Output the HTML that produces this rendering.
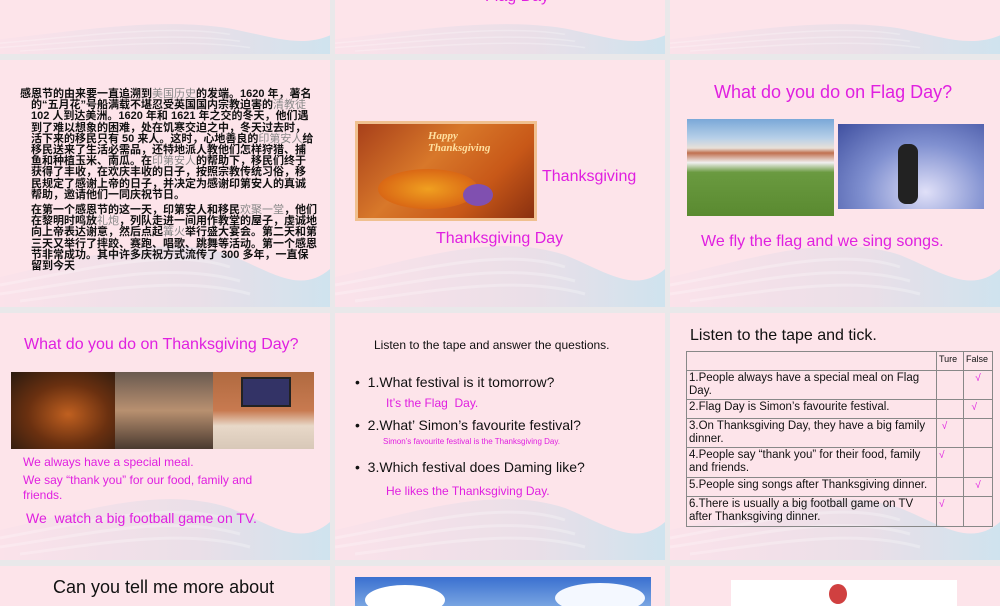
<!DOCTYPE html>
<html><head><meta charset="utf-8"><style>
*{margin:0;padding:0;box-sizing:border-box}
body{width:1000px;height:600px;background:#e9e8ea;position:relative;overflow:hidden;font-family:"Liberation Sans","Noto Sans CJK SC",sans-serif}
.s{position:absolute;background:#fde4ea;overflow:hidden}
.s svg.w{position:absolute;left:0;bottom:0;width:100%;height:110px}
.a{position:absolute;white-space:nowrap}
.m{color:#e020e0}
table{border-collapse:collapse;font-size:11.5px;color:#111}
td{border:1px solid #888;padding:1px 2px;line-height:13px;vertical-align:top}
.ck{color:#e020e0;font-size:10px}
.cn{position:absolute;font-size:11px;line-height:11.2px;color:#111;letter-spacing:0;font-weight:bold}
.g{color:#888;font-weight:normal}
</style></head><body>
<svg width="0" height="0" style="position:absolute"><defs>
<linearGradient id="g" x1="0" x2="1"><stop offset="0" stop-color="#fbe2ea"/><stop offset="0.6" stop-color="#eadfe8"/><stop offset="1" stop-color="#cfe3ee"/></linearGradient>
<symbol id="wv" viewBox="0 0 330 110" preserveAspectRatio="none"><path d="M0 110 L0 80 C80 62 160 35 230 58 C270 74 300 98 330 72 L330 110Z" fill="url(#g)"/><path d="M0 88 C90 72 170 50 230 70 M0 97 C90 84 170 64 240 84 M20 104 C100 94 180 78 250 97" stroke="#fff" stroke-opacity=".25" fill="none" stroke-width="3"/></symbol>
</defs></svg>

<div class="s" style="left:0;top:0;width:330px;height:54px"><svg class="w" style="height:54px"><use href="#wv" width="330" height="54"/></svg></div>
<div class="s" style="left:335px;top:0;width:330px;height:54px"><svg class="w" style="height:54px"><use href="#wv" width="330" height="54"/></svg><div class="a m" style="left:150px;top:-12px;font-size:16px">Flag Day</div></div>
<div class="s" style="left:670px;top:0;width:330px;height:54px"><svg class="w" style="height:54px"><use href="#wv" width="330" height="54"/></svg></div>

<div class="s" style="left:0;top:60px;width:330px;height:247px"><svg class="w"><use href="#wv" width="330" height="110"/></svg>
<div class="cn" style="left:20px;top:29px;width:294px;text-indent:-11px;padding-left:11px">感恩节的由来要一直追溯到<span class="g">美国历史</span>的发端。1620 年，著名的“五月花”号船满载不堪忍受英国国内宗教迫害的<span class="g">清教徒</span> 102 人到达美洲。1620 年和 1621 年之交的冬天，他们遇到了难以想象的困难，处在饥寒交迫之中，冬天过去时，活下来的移民只有 50 来人。这时，心地善良的<span class="g">印第安人</span>给移民送来了生活必需品，还特地派人教他们怎样狩猎、捕鱼和种植玉米、南瓜。在<span class="g">印第安人</span>的帮助下，移民们终于获得了丰收，在欢庆丰收的日子，按照宗教传统习俗，移民规定了感谢上帝的日子，并决定为感谢印第安人的真诚帮助，邀请他们一同庆祝节日。</div>
<div class="cn" style="left:31px;top:145px;width:286px">在第一个感恩节的这一天，印第安人和移民<span class="g">欢聚一堂</span>，他们在黎明时鸣放<span class="g">礼炮</span>，列队走进一间用作教堂的屋子，虔诚地向上帝表达谢意，然后点起<span class="g">篝火</span>举行盛大宴会。第二天和第三天又举行了摔跤、赛跑、唱歌、跳舞等活动。第一个感恩节非常成功。其中许多庆祝方式流传了 300 多年，一直保留到今天</div>
</div>
<div class="s" style="left:335px;top:60px;width:330px;height:247px"><svg class="w"><use href="#wv" width="330" height="110"/></svg>
<div style="position:absolute;left:20px;top:61px;width:182px;height:100px;background:linear-gradient(135deg,#a8401a,#d8782a 40%,#c85818 70%,#8a3010);border:3px solid #f0c090">
<div style="position:absolute;left:70px;top:6px;font:italic bold 11px 'Liberation Serif',serif;color:#ffe0a0;line-height:12px">Happy<br>Thanksgiving</div>
<div style="position:absolute;left:20px;top:45px;width:100px;height:40px;border-radius:50%;background:radial-gradient(#f0a020,#d05010)"></div>
<div style="position:absolute;left:105px;top:60px;width:30px;height:22px;border-radius:50%;background:#8050b0"></div></div>
<div class="a m" style="left:207px;top:108px;font-size:16px">Thanksgiving</div>
<div class="a m" style="left:101px;top:170px;font-size:16px">Thanksgiving Day</div></div>
<div class="s" style="left:670px;top:60px;width:330px;height:247px"><svg class="w"><use href="#wv" width="330" height="110"/></svg>
<div class="a m" style="left:44px;top:22px;font-size:18px">What do you do on Flag Day?</div>
<div style="position:absolute;left:17px;top:59px;width:147px;height:97px;background:linear-gradient(#7aa8d8 0,#b8d0e8 20%,#e8e0d8 30%,#c07050 35%,#f0f0f0 45%,#6a9a40 55%,#5a8a30 100%)"></div>
<div style="position:absolute;left:168px;top:64px;width:146px;height:85px;background:radial-gradient(ellipse at 60% 80%,#e0e0f8,#8090d0 50%,#4050a0)"><div style="position:absolute;left:60px;top:20px;width:20px;height:60px;background:#222;border-radius:8px"></div></div>
<div class="a m" style="left:31px;top:173px;font-size:16px">We fly the flag and we sing songs.</div></div>

<div class="s" style="left:0;top:313px;width:330px;height:247px"><svg class="w"><use href="#wv" width="330" height="110"/></svg>
<div class="a m" style="left:24px;top:23px;font-size:16px">What do you do on Thanksgiving Day?</div>
<div style="position:absolute;left:11px;top:59px;width:104px;height:77px;background:radial-gradient(ellipse at 55% 55%,#c06020,#6a3010 50%,#2a1a10)"></div>
<div style="position:absolute;left:115px;top:59px;width:98px;height:77px;background:linear-gradient(#6a5a50,#b89070 50%,#4a3a30)"></div>
<div style="position:absolute;left:213px;top:59px;width:101px;height:77px;background:linear-gradient(#b06a40 0,#c87a50 50%,#e8d8c8 70%,#d8c8b8)"><div style="position:absolute;left:28px;top:5px;width:50px;height:30px;background:#336;border:2px solid #222"></div></div>
<div class="a m" style="left:23px;top:142px;font-size:12px">We always have a special meal.</div>
<div class="m" style="position:absolute;left:23px;top:160px;width:260px;font-size:12px;line-height:15px">We say “thank you” for our food, family and friends.</div>
<div class="a m" style="left:26px;top:197px;font-size:14px">We &nbsp;watch a big football game on TV.</div></div>
<div class="s" style="left:335px;top:313px;width:330px;height:247px"><svg class="w"><use href="#wv" width="330" height="110"/></svg>
<div class="a" style="left:39px;top:25px;font-size:12px;color:#111">Listen to the tape and answer the questions.</div>
<div class="a" style="left:20px;top:61px;font-size:14px;color:#111">• &nbsp;1.What festival is it tomorrow?</div>
<div class="a m" style="left:51px;top:83px;font-size:12px">It’s the Flag &nbsp;Day.</div>
<div class="a" style="left:20px;top:104px;font-size:14px;color:#111">• &nbsp;2.What’ Simon’s favourite festival?</div>
<div class="a m" style="left:48px;top:124px;font-size:8px">Simon’s favourite festival is the Thanksgiving Day.</div>
<div class="a" style="left:20px;top:146px;font-size:14px;color:#111">• &nbsp;3.Which festival does Daming like?</div>
<div class="a m" style="left:51px;top:171px;font-size:12px">He likes the Thanksgiving Day.</div></div>
<div class="s" style="left:670px;top:313px;width:330px;height:247px"><svg class="w"><use href="#wv" width="330" height="110"/></svg>
<div class="a" style="left:20px;top:14px;font-size:16px;color:#111">Listen to the tape and tick.</div>
<table style="position:absolute;left:16px;top:38px;width:307px">
<tr><td style="width:250px;height:19px"></td><td style="width:27px;font-size:9px">Ture</td><td style="font-size:9px">False</td></tr>
<tr><td style="height:29px">1.People always have a special meal on Flag Day.</td><td></td><td class="ck" style="text-align:center">√</td></tr>
<tr><td style="height:19px">2.Flag Day is Simon’s favourite festival.</td><td></td><td class="ck">&nbsp;&nbsp;√</td></tr>
<tr><td style="height:29px">3.On Thanksgiving Day, they have a big family dinner.</td><td class="ck">&nbsp;√</td><td></td></tr>
<tr><td style="height:30px">4.People say “thank you” for their food, family and friends.</td><td class="ck">√</td><td></td></tr>
<tr><td style="height:19px">5.People sing songs after Thanksgiving dinner.</td><td></td><td class="ck" style="text-align:center">√</td></tr>
<tr><td style="height:30px">6.There is usually a big football game on TV after Thanksgiving dinner.</td><td class="ck">√</td><td></td></tr>
</table></div>

<div class="s" style="left:0;top:566px;width:330px;height:40px"><div class="a" style="left:53px;top:11px;font-size:18px;color:#111">Can you tell me more about</div></div>
<div class="s" style="left:335px;top:566px;width:330px;height:40px"><div style="position:absolute;left:20px;top:11px;width:296px;height:40px;background:linear-gradient(#3a70d0,#90b8e8);"><div style="position:absolute;left:10px;top:8px;width:80px;height:30px;background:#fff;border-radius:50%"></div><div style="position:absolute;left:200px;top:6px;width:90px;height:30px;background:#f4f8ff;border-radius:50%"></div></div></div>
<div class="s" style="left:670px;top:566px;width:330px;height:40px"><div style="position:absolute;left:61px;top:14px;width:226px;height:30px;background:#fff"><div style="position:absolute;left:98px;top:4px;width:18px;height:20px;border-radius:50%;background:#d04040"></div></div></div>
</body></html>
